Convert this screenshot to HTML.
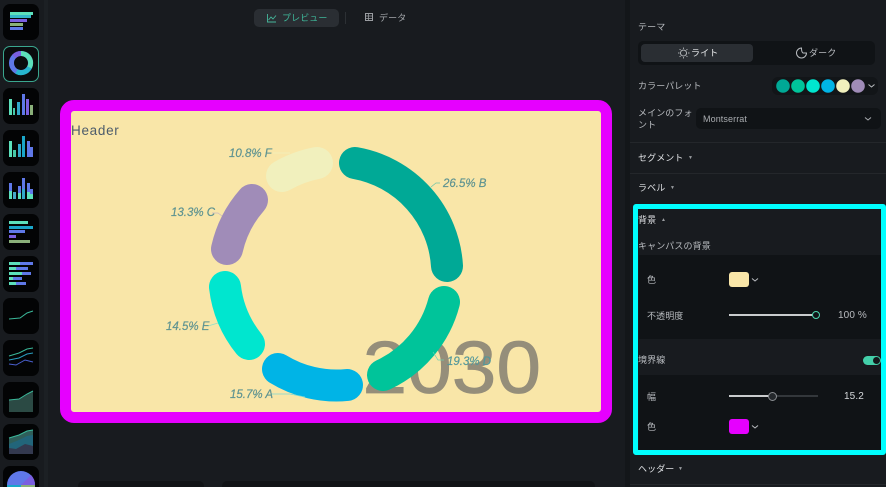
<!DOCTYPE html>
<html lang="ja"><head><meta charset="utf-8"><style>
html,body{margin:0;padding:0}
body{width:886px;height:487px;overflow:hidden;background:#181b1f;position:relative;font-family:"Liberation Sans","Noto Sans CJK JP",sans-serif;color:#b9bcc0}
.a{position:absolute}
.t{position:absolute;font-size:9px;line-height:12px;white-space:nowrap;letter-spacing:.1px}
.th{position:absolute;left:3px;width:36px;height:36px;background:#030405;border-radius:7px;overflow:hidden}
.h{color:#dfe1e4}
.tri{position:absolute;font-size:5px;line-height:6px;color:#9a9da1}
.hr{position:absolute;left:630px;width:256px;height:1px;background:#24272b}
svg{position:absolute;left:0;top:0}
</style></head><body>
<div class="a" style="left:44px;top:0;width:4px;height:487px;background:#1c2024"></div>
<div class="a" style="left:625px;top:0;width:5px;height:487px;background:#131619"></div>

<div class="th" style="top:4px"><svg width="36" height="36"><rect x="7" y="8" width="23" height="3" fill="#5ce0bb"/><rect x="7" y="11" width="21" height="3" fill="#34b7c9"/><rect x="7" y="15" width="17" height="3" fill="#7a5fe0"/><rect x="7" y="19" width="13" height="3" fill="#8ab07a"/><rect x="7" y="23" width="13" height="3" fill="#5f78e8"/></svg></div>
<div class="th" style="top:46px;box-sizing:border-box;border:1px solid #3aa78f;background:#0a0c0e"><svg width="34" height="34"><circle cx="17" cy="16" r="9.500" fill="none" stroke="#5f78e8" stroke-width="5"/><path d="M17 6.500A9.500 9.500 0 0 1 25.500 20.500" fill="none" stroke="#5ce0bb" stroke-width="5"/><path d="M25.500 20.500A9.500 9.500 0 0 1 12.500 24.500" fill="none" stroke="#27b6cf" stroke-width="5"/><path d="M17 6.500A9.500 9.500 0 0 0 10 9.500" fill="none" stroke="#7a5fe0" stroke-width="5"/></svg></div>
<div class="th" style="top:88px"><svg width="36" height="36"><rect x="6" y="11" width="3" height="16" fill="#5ce0bb"/><rect x="10" y="20" width="2" height="7" fill="#46c9a8"/><rect x="14" y="14" width="3" height="13" fill="#30a8c9"/><rect x="19" y="6" width="3" height="21" fill="#5f78e8"/><rect x="23" y="11" width="3" height="16" fill="#7a5fe0"/><rect x="27" y="17" width="3" height="10" fill="#8ab07a"/></svg></div>
<div class="th" style="top:130px"><svg width="36" height="36"><rect x="6" y="11" width="3" height="16" fill="#5ce0bb"/><rect x="10" y="20" width="3" height="7" fill="#46c9a8"/><rect x="15" y="14" width="3" height="13" fill="#30a8c9"/><rect x="19" y="6" width="3" height="21" fill="#1aa6c9"/><rect x="24" y="11" width="3" height="16" fill="#5f78e8"/><rect x="27" y="17" width="3" height="10" fill="#5f78e8"/></svg></div>
<div class="th" style="top:172px"><svg width="36" height="36"><rect x="6" y="11" width="3" height="16" fill="#5f78e8"/><rect x="6" y="19" width="3" height="8" fill="#5ce0bb"/><rect x="10" y="20" width="3" height="7" fill="#46a8c9"/><rect x="15" y="14" width="3" height="13" fill="#5f78e8"/><rect x="15" y="21" width="3" height="6" fill="#5ce0bb"/><rect x="19" y="6" width="3" height="21" fill="#5f78e8"/><rect x="19" y="17" width="3" height="10" fill="#30a8c9"/><rect x="24" y="11" width="3" height="16" fill="#5f78e8"/><rect x="24" y="20" width="3" height="7" fill="#5ce0bb"/><rect x="27" y="17" width="3" height="10" fill="#5f78e8"/><rect x="27" y="22" width="3" height="5" fill="#5ce0bb"/></svg></div>
<div class="th" style="top:214px"><svg width="36" height="36"><rect x="6" y="7" width="19" height="3" fill="#5ce0bb"/><rect x="6" y="12" width="24" height="3" fill="#1aa6c9"/><rect x="6" y="16" width="16" height="3" fill="#5f78e8"/><rect x="6" y="21" width="7" height="3" fill="#7a5fe0"/><rect x="6" y="26" width="21" height="3" fill="#8ab07a"/></svg></div>
<div class="th" style="top:256px"><svg width="36" height="36"><rect x="6" y="6" width="11" height="3" fill="#5ce0bb"/><rect x="17" y="6" width="13" height="3" fill="#5f78e8"/><rect x="6" y="11" width="7" height="3" fill="#5ce0bb"/><rect x="13" y="11" width="12" height="3" fill="#5f78e8"/><rect x="6" y="16" width="13" height="3" fill="#5ce0bb"/><rect x="19" y="16" width="9" height="3" fill="#5f78e8"/><rect x="6" y="21" width="4" height="3" fill="#5ce0bb"/><rect x="10" y="21" width="9" height="3" fill="#5f78e8"/><rect x="6" y="26" width="7" height="3" fill="#5ce0bb"/><rect x="13" y="26" width="10" height="3" fill="#5f78e8"/></svg></div>
<div class="th" style="top:298px"><svg width="36" height="36"><path d="M6 21L17 20L24 15L30 13" fill="none" stroke="#3ab89a" stroke-width="1"/></svg></div>
<div class="th" style="top:340px"><svg width="36" height="36"><path d="M6 16L16 13L24 9L30 8" fill="none" stroke="#3ab89a"/><path d="M6 20L16 18L24 14L30 13" fill="none" stroke="#2a9fc0"/><path d="M6 24L13 25L22 20L30 22" fill="none" stroke="#4a60d0"/></svg></div>
<div class="th" style="top:382px"><svg width="36" height="36"><path d="M6 18L16 17L24 12L30 9V30H6Z" fill="#2b4a44"/><path d="M6 18L16 17L24 12L30 9" fill="none" stroke="#3ab89a"/></svg></div>
<div class="th" style="top:424px"><svg width="36" height="36"><path d="M6 14L16 11L24 7L30 6V30H6Z" fill="#2f5f5a"/><path d="M6 20L16 16L24 12L30 11V30H6Z" fill="#22657a"/><path d="M6 24L13 25L22 20L30 22V30H6Z" fill="#33394f"/><path d="M6 14L16 11L24 7L30 6" fill="none" stroke="#3ab89a"/></svg></div>
<div class="th" style="top:466px;height:21px;border-radius:7px 7px 0 0"><svg width="36" height="21"><circle cx="18" cy="19" r="14" fill="#5f78e8"/><path d="M18 19L28 9A14 14 0 0 1 32 19Z" fill="#7a5fe0"/><path d="M18 19H32V33H18Z" fill="#8ab07a"/><path d="M18 19L4 19A14 14 0 0 0 18 33Z" fill="#1aa6c9"/></svg></div>

<div class="a" style="left:254px;top:9px;width:85px;height:18px;background:#2a2e33;border-radius:5px"></div>
<svg width="886" height="40" style="z-index:2"><path d="M267.500 14V22H276M268.500 20L271 17L273 19L276 15.500" fill="none" stroke="#45b79b" stroke-width=".9"/><rect x="345" y="12" width="1" height="12" fill="#2c3034"/><rect x="365.500" y="13.500" width="7" height="7" fill="none" stroke="#9a9da1" stroke-width="1"/><path d="M365.500 16H372.500M365.500 18.500H372.500M368.500 13.500V20.500" stroke="#9a9da1" stroke-width=".8"/></svg>
<div class="t" style="left:282px;top:12px;color:#3fb89a">プレビュー</div>
<div class="t" style="left:379px;top:12px;color:#a5a8ac">データ</div>

<div class="a" style="left:60px;top:100px;width:530px;height:301px;background:#f9e6a8;border:11px solid #e600ff;border-radius:14px"></div>
<div class="a" style="left:71px;top:123px;font-size:13.500px;line-height:16px;color:#4d5c6b;letter-spacing:.7px">Header</div>
<svg width="886" height="487" style="z-index:1" font-family="Liberation Sans" font-style="italic">
<text transform="translate(362.500 393) scale(1.085 1)" font-size="74" font-style="normal" fill="#958e7a" stroke="#958e7a" stroke-width=".8">2030</text>
<g fill="none" stroke-width="32" stroke-linecap="round">
<path d="M355 163A111.500 111.500 0 0 1 447 266" stroke="#00a996"/>
<path d="M444 302A111.500 111.500 0 0 1 383 375" stroke="#00c49a"/>
<path d="M347 385A111.500 111.500 0 0 1 278 369" stroke="#00b4e6"/>
<path d="M249 344A111.500 111.500 0 0 1 225 287" stroke="#00e6cf"/>
<path d="M227 249A111.500 111.500 0 0 1 252 200" stroke="#a08cb8"/>
<path d="M282 176A111.500 111.500 0 0 1 317 163" stroke="#f1f0bd"/>
</g>
<g fill="none" stroke-width=".7">
<path d="M431 187L436 183H440" stroke="#6fc4a8"/>
<path d="M433 352L438 360H444" stroke="#6fd0b0"/>
<path d="M271 394H290L305 397" stroke="#7fd8d0"/>
<path d="M208 326L218 323" stroke="#8fe0c8"/>
<path d="M212 213H218L222 216" stroke="#c8b8c0"/>
<path d="M273 153H290" stroke="#f1f0bd"/>
</g>
<g font-size="11.500" fill="#5e9391" stroke="#5e9391" stroke-width=".2">
<text x="229" y="157">10.8% F</text>
<text x="171" y="216">13.3% C</text>
<text x="443" y="187">26.5% B</text>
<text x="166" y="330">14.5% E</text>
<text x="230" y="398">15.7% A</text>
<text x="447" y="365" fill="#4d9aa0">19.3% D</text>
</g>
</svg>

<div class="a" style="left:78px;top:481px;width:126px;height:6px;background:#111316;border-radius:5px 5px 0 0"></div>
<div class="a" style="left:222px;top:481px;width:373px;height:6px;background:#111316;border-radius:5px 5px 0 0"></div>

<div class="t" style="left:638px;top:21px">テーマ</div>
<div class="a" style="left:638px;top:41px;width:237px;height:24px;background:#101316;border-radius:5px"></div>
<div class="a" style="left:641px;top:44px;width:112px;height:18px;background:#2a2e33;border-radius:4px"></div>
<svg width="886" height="70" style="z-index:2"><circle cx="683.500" cy="53" r="3" fill="none" stroke="#d0d3d6" stroke-width=".8"/><path d="M683.500 47.500v1.500M683.500 57v1.500M678 53h1.500M688 53h1.500M679.600 49.100l1 1M686.400 55.900l1 1M687.400 49.100l-1 1M680.600 55.900l-1 1" stroke="#d0d3d6" stroke-width=".7"/><path d="M801.500 48A5 5 0 1 0 806.500 53H803A2 5 0 0 1 801.500 48Z" fill="none" stroke="#b9bcc0" stroke-width="1"/></svg>
<div class="t h" style="left:691px;top:47px;color:#eceef0">ライト</div>
<div class="t" style="left:809px;top:47px">ダーク</div>

<div class="t" style="left:638px;top:80px">カラーパレット</div>
<div class="a" style="left:772px;top:77px;width:106px;height:18px;background:#121518;border-radius:6px"></div>
<svg width="886" height="100" style="z-index:2"><circle cx="783" cy="86" r="6.800" fill="#00a996"/><circle cx="798" cy="86" r="6.800" fill="#00c49a"/><circle cx="813" cy="86" r="6.800" fill="#00e6cf"/><circle cx="828" cy="86" r="6.800" fill="#00b4e6"/><circle cx="843" cy="86" r="6.800" fill="#f1f0bd"/><circle cx="858" cy="86" r="6.800" fill="#a08cb8"/><path d="M868.500 84.500L871.500 87L874.500 84.500" fill="none" stroke="#b9bcc0" stroke-width="1"/></svg>
<div class="t" style="left:638px;top:107px;line-height:12px;white-space:normal;width:58px">メインのフォント</div>
<div class="a" style="left:696px;top:108px;width:185px;height:21px;background:#101316;border-radius:5px"></div>
<div class="t" style="left:703px;top:113px;color:#a9acb0">Montserrat</div>
<svg width="886" height="130" style="z-index:2"><path d="M865 117.500L868 120L871 117.500" fill="none" stroke="#a9acb0" stroke-width="1"/></svg>

<div class="hr" style="top:142px"></div>
<div class="t h" style="left:638px;top:152px">セグメント</div><div class="tri" style="left:688px;top:155px">▼</div>
<div class="hr" style="top:173px"></div>
<div class="t h" style="left:638px;top:182px">ラベル</div><div class="tri" style="left:670px;top:185px">▼</div>

<div class="a" style="left:639px;top:255px;width:242px;height:84px;background:#101316"></div>
<div class="a" style="left:639px;top:375px;width:242px;height:75px;background:#101316"></div>
<div class="a" style="left:633px;top:204px;border:5px solid #00ffff;border-radius:3px;box-sizing:content-box;width:243px;height:241px"></div>

<div class="t h" style="left:638px;top:214px;z-index:3">背景</div><div class="tri" style="left:661px;top:217px">▲</div>
<div class="t" style="left:638px;top:240px;z-index:3">キャンパスの背景</div>
<div class="t" style="left:647px;top:274px">色</div>
<div class="a" style="left:729px;top:272px;width:20px;height:15px;background:#f9e6a8;border-radius:3px"></div>
<div class="t" style="left:647px;top:310px">不透明度</div>
<div class="a" style="left:729px;top:314px;width:88px;height:2px;background:#c9cbcd"></div>
<div class="a" style="left:812px;top:311px;width:6px;height:6px;border:1.500px solid #4fd6b0;border-radius:50%;background:#101316"></div>
<div class="t" style="left:838px;top:310px;font-size:10px">100 %</div>

<div class="t" style="left:638px;top:354px;z-index:3">境界線</div>
<div class="a" style="left:863px;top:356px;width:18px;height:9px;background:#43cfa9;border-radius:5px"></div>
<div class="a" style="left:873px;top:357px;width:7px;height:7px;background:#14181b;border-radius:50%"></div>

<div class="t" style="left:647px;top:391px">幅</div>
<div class="a" style="left:729px;top:395px;width:44px;height:2px;background:#c9cbcd"></div>
<div class="a" style="left:773px;top:395px;width:45px;height:2px;background:#33373b"></div>
<div class="a" style="left:768px;top:391.500px;width:7px;height:7px;border:1.500px solid #8b8e92;border-radius:50%;background:#24282c"></div>
<div class="t" style="left:844px;top:391px;font-size:10px;color:#d5d8db">15.2</div>
<div class="t" style="left:647px;top:421px">色</div>
<div class="a" style="left:729px;top:419px;width:20px;height:15px;background:#e600ff;border-radius:3px"></div>
<svg width="886" height="487" style="z-index:2"><path d="M752 278.500L755 281L758 278.500M752 425.500L755 428L758 425.500" fill="none" stroke="#b9bcc0" stroke-width="1"/></svg>

<div class="t h" style="left:638px;top:463px">ヘッダー</div><div class="tri" style="left:678px;top:466px">▼</div>
<div class="hr" style="top:484px"></div>
</body></html>
